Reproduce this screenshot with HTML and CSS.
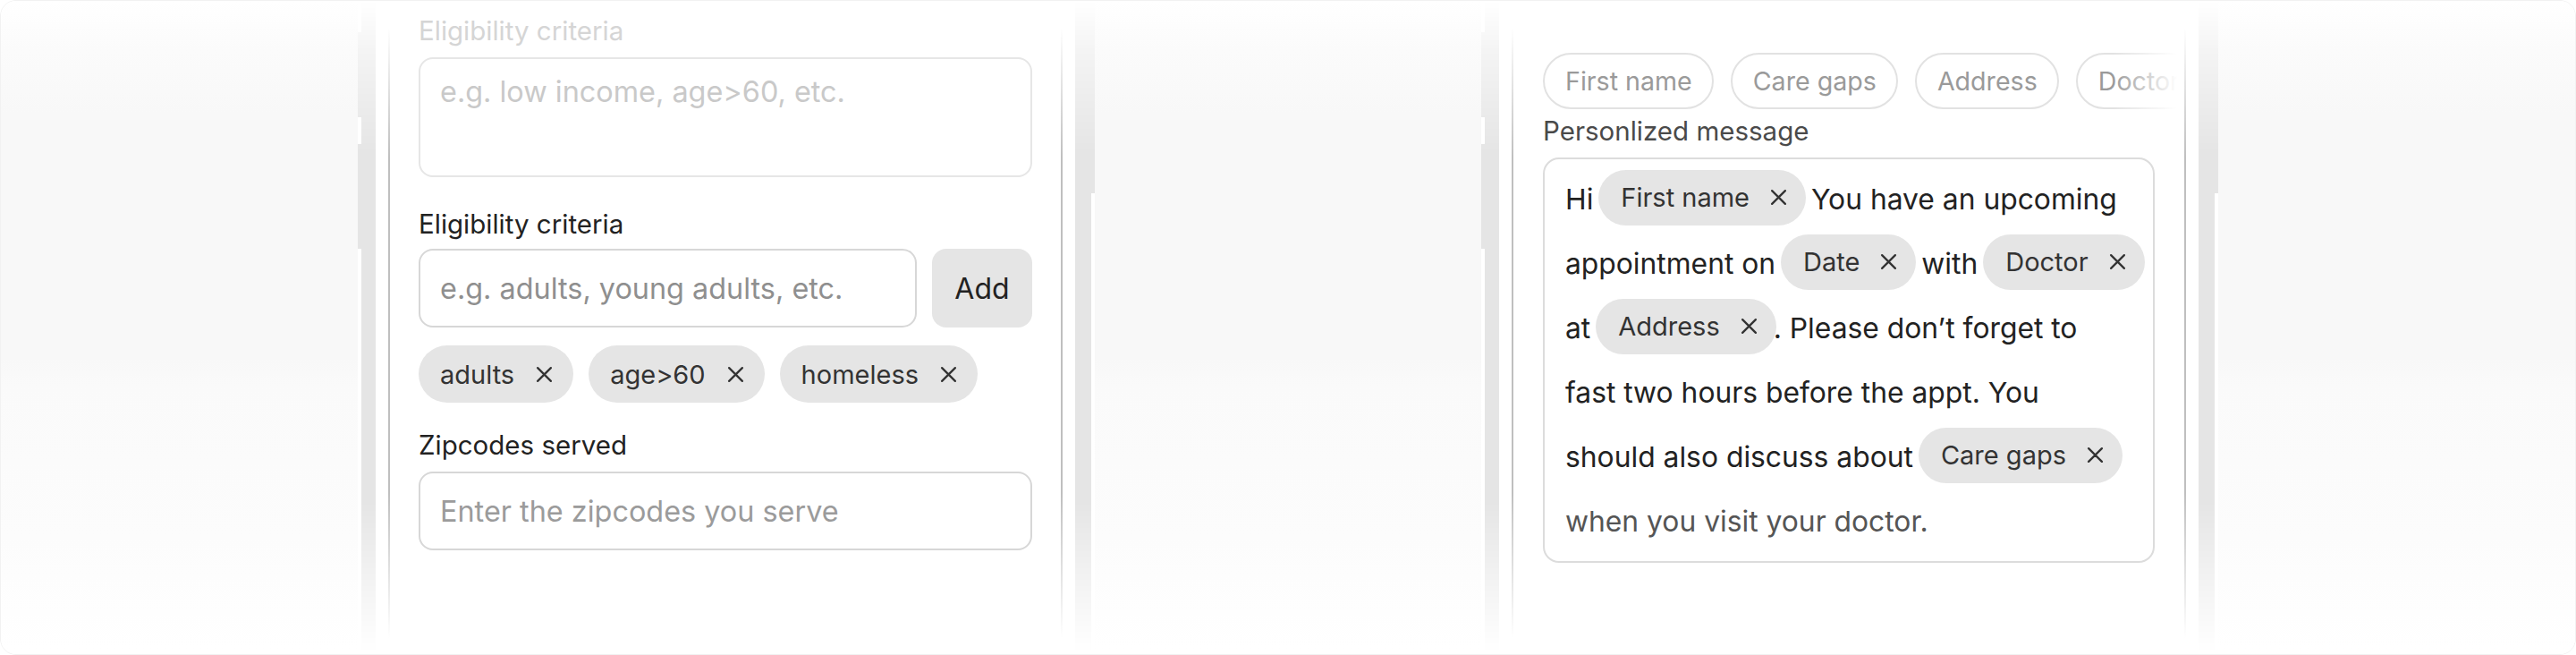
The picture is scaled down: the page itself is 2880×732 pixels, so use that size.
FILE: index.html
```html
<!DOCTYPE html>
<html lang="en">
<head>
  <meta charset="UTF-8">
  <meta name="viewport" content="width=device-width, initial-scale=1.0">
  <title>Eligibility and message</title>
  <link rel="stylesheet" href="styles.css">
</head>
<body>
  <div class="canvas">
    <div class="ghost"></div>
    <div class="edge edge-in"></div>
    <div class="gap"></div>

    <section class="screen">
      <label class="label faded">Eligibility criteria</label>
      <textarea class="field area faded" placeholder="e.g. low income, age>60, etc."></textarea>

      <label class="label label-2">Eligibility criteria</label>
      <div class="add-row">
        <input class="field" type="text" placeholder="e.g. adults, young adults, etc.">
        <button class="add-btn">Add</button>
      </div>
      <div class="tags">
        <span class="tag">adults <svg class="x" viewBox="0 0 18 18"><path d="M2 2L16 16M16 2L2 16"/></svg></span>
        <span class="tag">age&gt;60 <svg class="x" viewBox="0 0 18 18"><path d="M2 2L16 16M16 2L2 16"/></svg></span>
        <span class="tag">homeless <svg class="x" viewBox="0 0 18 18"><path d="M2 2L16 16M16 2L2 16"/></svg></span>
      </div>

      <label class="label label-3">Zipcodes served</label>
      <input class="field zip" type="text" placeholder="Enter the zipcodes you serve">
    </section>

    <div class="gap"></div>
    <div class="edge edge-out"></div>
    <div class="ghost ghost-mid"></div>
    <div class="edge edge-in"></div>
    <div class="gap"></div>

    <section class="screen screen-msg">
      <div class="tokens">
        <span class="token">First name</span>
        <span class="token">Care gaps</span>
        <span class="token">Address</span>
        <span class="token">Doctor</span>
      </div>
      <label class="label muted">Personlized message</label>
      <div class="message">
        <span class="line">Hi <span class="tag">First name <svg class="x" viewBox="0 0 18 18"><path d="M2 2L16 16M16 2L2 16"/></svg></span> You have an upcoming</span>
        <span class="line">appointment on <span class="tag">Date <svg class="x" viewBox="0 0 18 18"><path d="M2 2L16 16M16 2L2 16"/></svg></span> with <span class="tag">Doctor <svg class="x" viewBox="0 0 18 18"><path d="M2 2L16 16M16 2L2 16"/></svg></span></span>
        <span class="line">at <span class="tag">Address <svg class="x" viewBox="0 0 18 18"><path d="M2 2L16 16M16 2L2 16"/></svg></span>. Please don’t forget to</span>
        <span class="line">fast two hours before the appt. You</span>
        <span class="line">should also discuss about <span class="tag">Care gaps <svg class="x" viewBox="0 0 18 18"><path d="M2 2L16 16M16 2L2 16"/></svg></span></span>
        <span class="line soft">when you visit your doctor.</span>
      </div>
    </section>

    <div class="gap"></div>
    <div class="edge edge-out"></div>
    <div class="ghost ghost-end"></div>
  </div>
</body>
</html>
```

FILE: styles.css
```css
* { box-sizing: border-box; }
body {
  margin: 0;
  background: #fff;
  font-family: Inter, "Noto Sans", sans-serif;
  color: #222;
}
.canvas {
  display: flex;
  width: 2880px;
  height: 732px;
  border: 1px solid #f2f2f2;
  border-radius: 18px;
  overflow: hidden;
  background: #fff;
}

/* blurred phones between the two real screens */
.ghost {
  flex: 0 0 399px;
  background: linear-gradient(to bottom, #fff 0, #fbfbfb 55px, #f8f8f8 125px, #f8f8f8 400px, #fafafa 430px, #fcfcfc 600px, #fff 725px);
}
.ghost-mid { flex-basis: 432px; }
.edge {
  flex: 0 0 20px;
  -webkit-mask-image: linear-gradient(to bottom, transparent 0, rgba(0,0,0,.45) 60px, #000 170px, #000 560px, transparent 728px);
  mask-image: linear-gradient(to bottom, transparent 0, rgba(0,0,0,.45) 60px, #000 170px, #000 560px, transparent 728px);
}
/* band on the right side of a ghost, side keys poking left */
.edge-in {
  background:
    linear-gradient(to bottom, transparent 35px, #e5e5e5 35px, #e5e5e5 130px, transparent 130px, transparent 160px, #e5e5e5 160px, #e5e5e5 277px, transparent 277px) left top / 4px 100% no-repeat,
    linear-gradient(#e5e5e5, #e5e5e5) right top / 16px 100% no-repeat;
}
/* band on the left side of a ghost, key poking right */
.edge-out {
  flex-basis: 22px;
  background:
    linear-gradient(to bottom, #e5e5e5 0, #e5e5e5 215px, transparent 215px) right top / 4px 100% no-repeat,
    linear-gradient(#e5e5e5, #e5e5e5) left top / 18px 100% no-repeat;
}
.gap { flex: 0 0 14px; }

.screen {
  flex: 0 0 754px;
  display: flex;
  flex-direction: column;
  padding: 16px 34px 0;
  background:
    linear-gradient(to bottom, transparent 30px, #bfbfbf 175px, #bfbfbf 550px, transparent 712px) left top / 2px 100% no-repeat,
    linear-gradient(to bottom, transparent 30px, #bfbfbf 175px, #bfbfbf 550px, transparent 712px) right top / 2px 100% no-repeat,
    #fff;
}

.label {
  font-size: 29.5px;
  line-height: 34px;
  color: #222;
}
.label.faded { color: #d5d5d5; }
.label.muted { color: #4a4a4a; margin-top: 7px; }
.label-2 { margin-top: 35px; }
.label-3 { margin-top: 30px; }

.field {
  display: block;
  width: 100%;
  height: 88px;
  margin: 0;
  padding: 0 22px;
  border: 2px solid #d7d7d7;
  border-radius: 16px;
  background: #fff;
  font: 32.4px/38px Inter, "Noto Sans", sans-serif;
  color: #222;
  outline: none;
}
.field::placeholder { color: #8f8f8f; }
.field.area {
  height: 134px;
  margin-top: 13px;
  padding-top: 18px;
  resize: none;
  border-color: #e6e6e6;
}
.field.area::placeholder { color: #c9c9c9; }
.field.zip { margin-top: 13px; }
.field.zip::placeholder { color: #9b9b9b; }

.add-row {
  display: flex;
  gap: 17px;
  margin-top: 11px;
}
.add-row .field { flex: 1; }
.add-btn {
  flex: 0 0 112px;
  height: 88px;
  border: 0;
  border-radius: 16px;
  background: #e5e5e5;
  font: 32px Inter, "Noto Sans", sans-serif;
  color: #222;
}

.tags {
  display: flex;
  gap: 17px;
  margin-top: 20px;
}
.tag {
  display: inline-flex;
  align-items: center;
  gap: 24px;
  height: 64px;
  padding: 0 23px 0 24px;
  border-radius: 32px;
  background: #e5e5e5;
  font-size: 29px;
  color: #333;
  white-space: nowrap;
}
.x {
  width: 19px;
  height: 19px;
  fill: none;
  stroke: #333;
  stroke-width: 2.2;
  stroke-linecap: round;
}

/* right screen */
.screen-msg { padding: 58px 35px 0; }
.tokens {
  position: relative;
  display: flex;
  gap: 19px;
  margin-right: -33px;
  overflow: hidden;
}
.tokens::after {
  content: "";
  position: absolute;
  top: 0;
  right: 0;
  width: 80px;
  height: 100%;
  background: linear-gradient(to right, rgba(255,255,255,0), #fff 90%);
}
.token {
  flex: 0 0 auto;
  height: 63px;
  display: flex;
  align-items: center;
  padding: 0 22px 0 23px;
  border: 2px solid #e2e2e2;
  border-radius: 32px;
  font-size: 28.6px;
  color: #9a9a9a;
}
.message {
  margin-top: 13px;
  height: 453px;
  padding: 9px 0 0 23px;
  border: 2px solid #dcdcdc;
  border-radius: 18px;
  font-size: 31.8px;
  line-height: 72px;
  color: #222;
}
.line { display: block; white-space: nowrap; }
.line.soft { color: #555; }
.message .tag {
  height: 62px;
  margin: 0 -3px;
  padding: 0 21px 0 25px;
  gap: 23px;
  vertical-align: 3px;
  line-height: 1;
}
```
